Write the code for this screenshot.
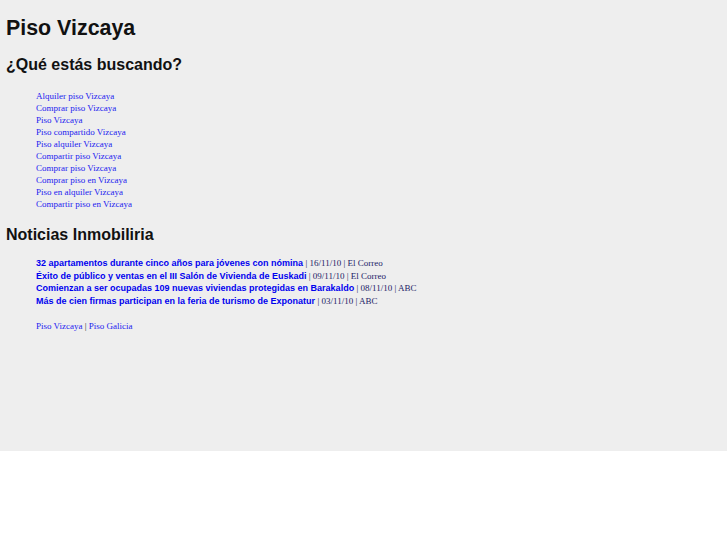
import React from "react"

const searches = [
  "Alquiler piso Vizcaya",
  "Comprar piso Vizcaya",
  "Piso Vizcaya",
  "Piso compartido Vizcaya",
  "Piso alquiler Vizcaya",
  "Compartir piso Vizcaya",
  "Comprar piso Vizcaya",
  "Comprar piso en Vizcaya",
  "Piso en alquiler Vizcaya",
  "Compartir piso en Vizcaya",
]

const news = [
  { title: "32 apartamentos durante cinco años para jóvenes con nómina", date: "16/11/10", source: "El Correo" },
  { title: "Éxito de público y ventas en el III Salón de Vivienda de Euskadi", date: "09/11/10", source: "El Correo" },
  { title: "Comienzan a ser ocupadas 109 nuevas viviendas protegidas en Barakaldo", date: "08/11/10", source: "ABC" },
  { title: "Más de cien firmas participan en la feria de turismo de Exponatur", date: "03/11/10", source: "ABC" },
]

const sans = "font-['Liberation_Sans',Arial,sans-serif]"
const serif = "font-['Liberation_Serif','Times_New_Roman',serif]"

const App = () => {
  return (
    <div className="bg-[#eeeeee] h-[451px] px-[6px] text-[#111]">
      <h1 className={`${sans} pt-[16px] text-[21.4px] leading-[24px] font-bold`}>
        Piso Vizcaya
      </h1>
      <h2 className={`${sans} mt-[15px] text-[16px] leading-[20px] font-bold`}>
        ¿Qué estás buscando?
      </h2>
      <ul className={`${serif} mt-[15px] pl-[30px] text-[9px] leading-[12px]`}>
        {searches.map((s, i) => (
          <li key={i}>
            <a href="#" className="text-[#2222ee]">
              {s}
            </a>
          </li>
        ))}
      </ul>
      <h2 className={`${sans} mt-[15px] text-[16px] leading-[20px] font-bold`}>
        Noticias Inmobiliria
      </h2>
      <ul className="mt-[12px] pl-[30px] text-[9px] leading-[12.7px]">
        {news.map((n, i) => (
          <li key={i}>
            <a href="#" className={`${sans} font-bold text-[#0000ee]`}>
              {n.title}
            </a>{" "}
            <span className={`${serif} text-[#222266]`}>
              | {n.date} | {n.source}
            </span>
          </li>
        ))}
      </ul>
      <p className={`${serif} mt-[12px] pl-[30px] text-[9px] leading-[12px] text-[#222]`}>
        <a href="#" className="text-[#2222ee]">Piso Vizcaya</a> |{" "}
        <a href="#" className="text-[#2222ee]">Piso Galicia</a>
      </p>
    </div>
  )
}

export default App
